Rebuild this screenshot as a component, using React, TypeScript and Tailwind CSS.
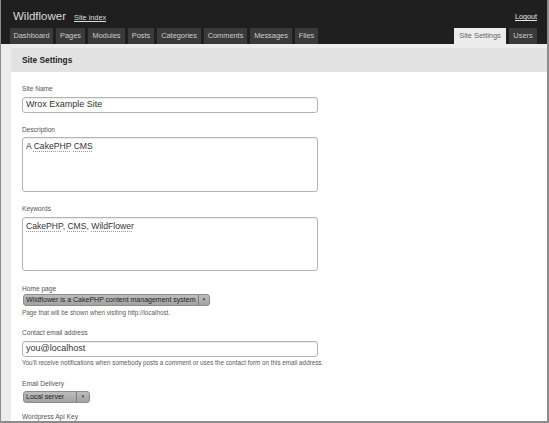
const leftTabs = [
  { label: 'Dashboard', w: 'w-[43px]' },
  { label: 'Pages', w: 'w-[29px]' },
  { label: 'Modules', w: 'w-[37px]' },
  { label: 'Posts', w: 'w-[26px]' },
  { label: 'Categories', w: 'w-[44px]' },
  { label: 'Comments', w: 'w-[43px]' },
  { label: 'Messages', w: 'w-[42px]' },
  { label: 'Files', w: 'w-[23px]' },
];

const Spell = ({ children }: { children: React.ReactNode }) => (
  <span className="underline decoration-dotted decoration-[#9a9a9a] decoration-[1px] underline-offset-[2px]">
    {children}
  </span>
);

const Label = ({ children, className = '' }: { children: React.ReactNode; className?: string }) => (
  <div className={`text-[6.6px] leading-[8px] text-[#555] ${className}`}>{children}</div>
);

const Help = ({ children, className = '' }: { children: React.ReactNode; className?: string }) => (
  <div className={`text-[6.3px] leading-[8px] text-[#5a5a5a] whitespace-nowrap ${className}`}>{children}</div>
);

const TextInput = ({ value }: { value: string }) => (
  <div className="w-[296px] h-[16px] border border-[#b4b4b4] rounded-[3px] bg-white shadow-[inset_0_1px_1px_rgba(0,0,0,0.08)] flex items-center pl-[3px] text-[9px] text-[#333]">
    {value}
  </div>
);

const TextArea = ({ h, children }: { h: string; children: React.ReactNode }) => (
  <div className={`w-[296px] ${h} border border-[#b4b4b4] rounded-[3px] bg-white shadow-[inset_0_1px_1px_rgba(0,0,0,0.08)] pl-[3px] pt-[3px] text-[8.6px] leading-[10px] text-[#333]`}>
    {children}
  </div>
);

const Select = ({ w, text, arrowW }: { w: string; text: string; arrowW: string }) => (
  <div className={`${w} h-[12px] ml-[1px] flex border border-[#8c8c8c] rounded-[3px] bg-gradient-to-b from-[#bdbdbd] to-[#a2a2a2] text-[7px] leading-[10px] text-[#1e1e1e] overflow-hidden`}>
    <div className="flex-1 min-w-0 pl-[2px] overflow-hidden whitespace-nowrap">{text}</div>
    <div className={`${arrowW} shrink-0 border-l border-[#7e7e7e] flex items-center justify-center text-[4.5px] text-[#444]`}>▼</div>
  </div>
);

export default function App() {
  return (
    <div
      className="w-[549px] h-[423px] overflow-hidden bg-[#ececec] border-l border-r-2 border-b-2 border-[#8c8c8c]"
      style={{ fontFamily: '"Liberation Sans", Arial, sans-serif' }}
    >
      {/* Header */}
      <div className="h-[44px] bg-[#1f1f1f] flex flex-col">
        <div className="h-[27px] flex justify-between">
          <div className="flex items-baseline pl-[12px] pt-[8px] gap-[8px]">
            <span className="text-[11.5px] text-[#dcdcdc]">Wildflower</span>
            <span className="text-[7.3px] text-[#dcdcdc] underline">Site index</span>
          </div>
          <div className="pt-[2px] pr-[10px]">
            <span className="text-[7.2px] text-[#e6e6e6] underline">Logout</span>
          </div>
        </div>
        <div className="h-[17px] flex items-end justify-between pl-[9px] pr-[10px]">
          <div className="flex gap-[3px]">
            {leftTabs.map((t) => (
              <div
                key={t.label}
                className={`${t.w} h-[16px] bg-[#3a3a3a] text-[#cdcdcd] text-[7.4px] flex items-center justify-center whitespace-nowrap`}
              >
                {t.label}
              </div>
            ))}
          </div>
          <div className="flex gap-[3px]">
            <div className="w-[52px] h-[16px] bg-[#ececec] text-[#666] text-[7.4px] flex items-center justify-center whitespace-nowrap">
              Site Settings
            </div>
            <div className="w-[28px] h-[16px] bg-[#3a3a3a] text-[#cdcdcd] text-[7.4px] flex items-center justify-center">
              Users
            </div>
          </div>
        </div>
      </div>

      {/* Content */}
      <div className="pt-[4px] pl-[10px]">
        <div className="h-[24px] bg-[#e2e2e2] flex items-center pl-[11px]">
          <span className="text-[8.3px] font-bold text-[#222]">Site Settings</span>
        </div>
        <div className="bg-white pl-[11px] pt-[13px] h-[400px]">
          <Label className="mb-[4px]">Site Name</Label>
          <TextInput value="Wrox Example Site" />

          <Label className="mt-[13px] mb-[3px]">Description</Label>
          <TextArea h="h-[55px]">
            A <Spell>CakePHP</Spell> <Spell>CMS</Spell>
          </TextArea>

          <Label className="mt-[13px] mb-[4px]">Keywords</Label>
          <TextArea h="h-[54px]">
            <Spell>CakePHP</Spell>, <Spell>CMS</Spell>, <Spell>WildFlower</Spell>
          </TextArea>

          <Label className="mt-[14px] mb-[1px]">Home page</Label>
          <Select w="w-[187px]" arrowW="w-[11px]" text="Wildflower is a CakePHP content management system" />
          <Help className="mt-[3px]">Page that will be shown when visiting http://localhost.</Help>

          <Label className="mt-[12px] mb-[4px]">Contact email address</Label>
          <TextInput value="you@localhost" />
          <Help className="mt-[2px]">
            You'll receive notifications when somebody posts a comment or uses the contact form on this email address.
          </Help>

          <Label className="mt-[13px] mb-[3px]">Email Delivery</Label>
          <Select w="w-[67px]" arrowW="w-[13px]" text="Local server" />

          <Label className="mt-[10px]">Wordpress Api Key</Label>
        </div>
      </div>
    </div>
  );
}
